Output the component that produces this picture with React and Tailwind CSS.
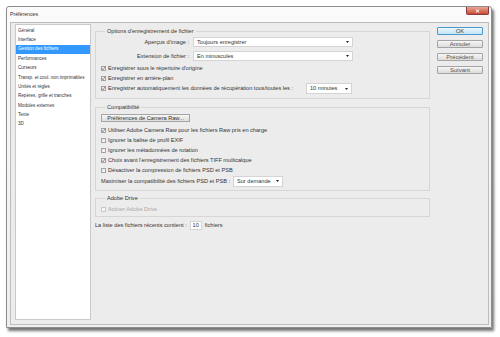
const sections = [
  "Général",
  "Interface",
  "Gestion des fichiers",
  "Performances",
  "Curseurs",
  "Transp. et coul. non imprimables",
  "Unités et règles",
  "Repères, grille et tranches",
  "Modules externes",
  "Texte",
  "3D",
];

const Check = ({ checked, disabled }) => (
  <span
    className={`flex h-[5px] w-[5px] shrink-0 items-center justify-center border ${
      disabled ? "border-[#c8c8c8] bg-[#f4f4f4]" : "border-[#a3a3a3] bg-gradient-to-br from-[#e2e2e2] to-white"
    }`}
  >
    {checked && (
      <svg width="5" height="5" viewBox="0 0 5 5" className="overflow-visible">
        <path d="M0.6 2.4 L1.9 3.8 L4.4 0.6" fill="none" stroke="#5a5a5a" strokeWidth="0.7" />
      </svg>
    )}
  </span>
);

const CheckRow = ({ label, checked, disabled }) => (
  <div className="flex h-[10px] items-center gap-[2px] pl-[4px]">
    <Check checked={checked} disabled={disabled} />
    <span className={disabled ? "text-[#a8a8a8]" : ""}>{label}</span>
  </div>
);

const Select = ({ value, className }) => (
  <div
    className={`flex h-[10px] items-center justify-between border border-[#d4d4d4] bg-white pl-[3px] pr-[3px] ${className}`}
  >
    <span>{value}</span>
    <svg width="3" height="2" viewBox="0 0 3 2">
      <path d="M0 0 H3 L1.5 2 Z" fill="#222" />
    </svg>
  </div>
);

const Group = ({ title, children, className }) => (
  <fieldset className={`border border-[#d6d6d6] px-[1px] ${className}`}>
    <legend className="ml-[8px] px-[2px] leading-[7px]">{title}</legend>
    {children}
  </fieldset>
);

const Button = ({ children, primary }) => (
  <button
    type="button"
    className={`flex h-[8px] w-[46px] items-center justify-center rounded-[1px] border text-[6px] leading-none ${
      primary
        ? "border-[#4a98cc] bg-gradient-to-b from-[#eaf6fd] to-[#c4e5f7] text-[#444]"
        : "border-[#a4a4a4] bg-gradient-to-b from-[#f6f6f6] to-[#dcdcdc] text-[#555]"
    }`}
  >
    {children}
  </button>
);

export default function App() {
  return (
    <div
      className="h-[337px] w-[500px] overflow-hidden bg-white pl-[6px] pt-[6px] text-[5.6px] text-[#333]"
      style={{ fontFamily: '"Liberation Sans", Arial, sans-serif' }}
    >
      <div className="flex h-[322px] w-[486px] flex-col rounded-t-[3px] border border-[#8d8d8d] bg-gradient-to-b from-[#fbfbfb] to-[#eeeeee] shadow-[2px_3px_3px_rgba(0,0,0,0.55)]">
        <div className="flex h-[15px] shrink-0 items-start justify-between pl-[3px]">
          <span className="pt-[4px] text-[5.2px] leading-[7px] text-[#333]">Préférences</span>
          <div className="mr-[2px] flex h-[8px] w-[23px] items-center justify-center rounded-b-[2px] border border-t-0 border-[#8b3a3a] bg-gradient-to-b from-[#e8a593] to-[#c74a36]">
            <svg width="5" height="4" viewBox="0 0 5 4">
              <path d="M0.8 0.4 L4.2 3.6 M4.2 0.4 L0.8 3.6" stroke="white" strokeWidth="1" />
            </svg>
          </div>
        </div>

        <div className="mb-[2px] ml-[3px] mr-[2px] flex flex-1 border border-[#bdbdbd] bg-[#ececec] pl-[4px]">
          <ul className="mt-[1px] h-[296px] w-[76px] shrink-0 border border-[#c9c9c9] bg-white pt-[1.3px] text-[4.6px]">
            {sections.map((s) => (
              <li
                key={s}
                className={`flex h-[9.4px] items-center px-[2px] ${
                  s === "Gestion des fichiers" ? "bg-[#3399ff] text-white" : ""
                }`}
              >
                {s}
              </li>
            ))}
          </ul>

          <div className="ml-[4px] flex w-[335px] shrink-0 flex-col">
            <Group title="Options d'enregistrement de fichier" className="mt-[4.5px] pb-[4px]">
              <div className="mt-[2.5px] flex h-[10px] items-center">
                <span className="w-[93px] pr-[1px] text-right">Aperçus d'image :</span>
                <Select value="Toujours enregistrer" className="ml-[3px] w-[160px]" />
              </div>
              <div className="mt-[4px] flex h-[10px] items-center">
                <span className="w-[93px] pr-[1px] text-right">Extension de fichier :</span>
                <Select value="En minuscules" className="ml-[3px] w-[160px]" />
              </div>
              <div className="mt-[2px]">
                <CheckRow label="Enregistrer sous le répertoire d'origine" checked />
                <CheckRow label="Enregistrer en arrière-plan" checked />
              </div>
              <div className="flex h-[11px] items-center">
                <CheckRow
                  label="Enregistrer automatiquement les données de récupération tous/toutes les :"
                  checked
                />
                <Select value="10 minutes" className="ml-auto mr-[76px] h-[11px] w-[46px]" />
              </div>
            </Group>

            <Group title="Compatibilité" className="mt-[4.5px] pb-[3px]">
              <div className="ml-[4px] mt-[3.5px] flex h-[8px] w-[89px] items-center justify-center border border-[#a6a6a6] bg-gradient-to-b from-[#f5f5f5] to-[#dedede]">
                Préférences de Camera Raw...
              </div>
              <div className="mt-[3px]">
                <CheckRow label="Utiliser Adobe Camera Raw pour les fichiers Raw pris en charge" checked />
                <CheckRow label="Ignorer la balise de profil EXIF" />
                <CheckRow label="Ignorer les métadonnées de rotation" />
                <CheckRow label="Choix avant l'enregistrement des fichiers TIFF multicalque" checked />
                <CheckRow label="Désactiver la compression de fichiers PSD et PSB" />
              </div>
              <div className="flex h-[12px] items-center pl-[4px]">
                <span>Maximiser la compatibilité des fichiers PSD et PSB :</span>
                <Select value="Sur demande" className="ml-[3px] h-[11px] w-[50px]" />
              </div>
            </Group>

            <Group title="Adobe Drive" className="mt-[3.5px] pb-[2px]">
              <div className="mt-[2.5px]">
                <CheckRow label="Activer Adobe Drive" disabled />
              </div>
            </Group>

            <div className="mt-[3px] flex h-[10px] items-center">
              <span>La liste des fichiers récents contient :</span>
              <span className="ml-[3px] flex h-[9px] w-[12px] items-center justify-center border border-[#d4d4d4] bg-white">
                10
              </span>
              <span className="ml-[3px]">fichiers</span>
            </div>
          </div>

          <div className="ml-[7px] mt-[4px] flex w-[46px] shrink-0 flex-col gap-[5px]">
            <Button primary>OK</Button>
            <Button>Annuler</Button>
            <Button>Précédent</Button>
            <Button>Suivant</Button>
          </div>
        </div>
      </div>
    </div>
  );
}
